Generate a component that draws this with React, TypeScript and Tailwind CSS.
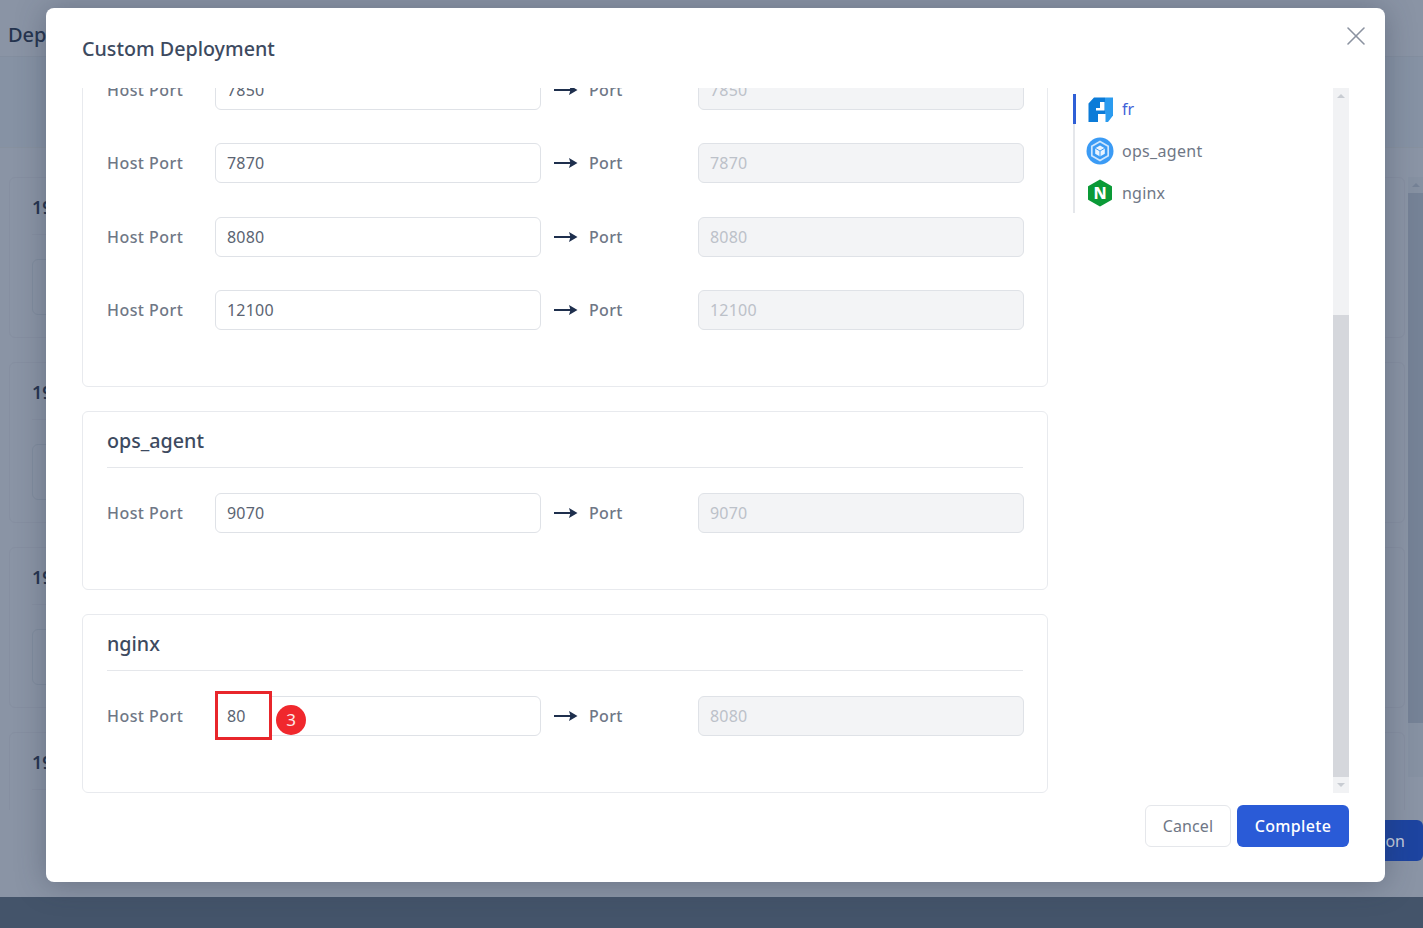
import { X } from "lucide-react";

const FONT = "font-['Noto_Sans','Open_Sans',sans-serif]";

const FrLogo = () => (
  <svg width="25" height="25" viewBox="0 0 25 25" fill="none">
    <path d="M6 0.5H17V25H10V17H10V25H0.5V6.5Z" fill="#0b7bd8" />
    <path d="M17 0.5H25V18.5L20 25H17Z" fill="#2a9bef" />
    <path d="M12 5H16.5V13.5H8V11H12Z" fill="#fff" />
    <path d="M10 17H17.5V25H10Z" fill="#fff" />
  </svg>
);

const OpsLogo = () => (
  <svg width="28" height="28" viewBox="0 0 28 28" fill="none">
    <circle cx="14" cy="14" r="13.5" fill="#3b9bf5" />
    <path d="M14 4.5l8.2 4.7v9.6L14 23.5l-8.2-4.7V9.2z" stroke="#cfe6fd" strokeWidth="1.7" />
    <path d="M14 8.5l4.8 2.7v5.6L14 19.5l-4.8-2.7v-5.6z" fill="#eaf4ff" />
    <path d="M9.2 11.2l4.8 2.8 4.8-2.8M14 14v5.5" stroke="#3b9bf5" strokeWidth="1" />
  </svg>
);

const NginxLogo = () => (
  <svg width="26" height="28" viewBox="0 0 26 28" fill="none">
    <path d="M13 1.5l11 6.3v12.4l-11 6.3-11-6.3V7.8z" fill="#0b9a37" stroke="#0b9a37" strokeWidth="2" strokeLinejoin="round" />
    <text x="13" y="20" textAnchor="middle" fontSize="16" fontWeight="800" fill="#fff" fontFamily="Noto Sans, sans-serif">
      N
    </text>
  </svg>
);

const Arrow = () => (
  <svg width="24" height="12" viewBox="0 0 24 12" fill="none" className="shrink-0">
    <path d="M0 6h18" stroke="#1e2f4d" strokeWidth="2" />
    <path d="M15 1l8.5 5-8.5 5 1.5-5z" fill="#1e2f4d" />
  </svg>
);

const PortRow = ({ port, target, mark }: { port: string; target?: string; mark?: boolean }) => (
  <div className="flex h-10 items-center">
    <span className="w-[108px] shrink-0 text-[16px] font-medium tracking-[0.45px] text-[#6f7786]">Host Port</span>
    <div className="relative w-[326px] shrink-0">
      <input
        readOnly
        value={mark ? "" : port}
        className="h-10 w-full rounded-md border border-[#dfe2e7] bg-white px-[11px] text-[16px] tracking-[0.2px] text-[#5b6472] outline-none"
      />
      {mark && (
        <>
          <div className="absolute top-[-5px] left-0 flex h-[49px] w-[57px] items-center border-[3px] border-[#e8262b] bg-white pl-[9px] text-[16px] tracking-[0.2px] text-[#5b6472]">
            {port}
          </div>
          <div className="absolute top-[9px] left-[61px] flex h-[30px] w-[30px] items-center justify-center rounded-full bg-[#f0282d] text-[17px] text-[#fde8e8]">
            3
          </div>
        </>
      )}
    </div>
    <span className="ml-[13px] flex items-center">
      <Arrow />
    </span>
    <span className="ml-[11px] w-[109px] shrink-0 text-[16px] font-medium tracking-[0.3px] text-[#6f7786]">Port</span>
    <input
      disabled
      value={target ?? port}
      className="h-10 w-[326px] shrink-0 rounded-md border border-[#dfe2e7] bg-[#f3f4f6] px-[11px] text-[16px] tracking-[0.2px] text-[#bcc1c9] outline-none"
    />
  </div>
);

const ServiceCard = ({ name, children }: { name: string; children: React.ReactNode }) => (
  <div className="rounded-md border border-[#e8eaee] px-6 pb-14">
    <div className="flex h-14 items-end border-b border-[#e5e7eb] pb-3 text-[19.7px] leading-[28px] font-medium text-[#3d4a5f]">
      {name}
    </div>
    <div className="flex flex-col gap-[33.5px] pt-[25px]">{children}</div>
  </div>
);

const BackCard = () => (
  <div className="h-[161px] shrink-0 rounded-md border border-[#868fa1] px-[22px] pt-[15px]">
    <div className="border-b border-[#868fa1] pb-[13px] text-[18px] leading-[28px] font-semibold text-[#25344f]">
      192.168.1.10
    </div>
    <div className="mt-6 h-[56px] rounded-md border border-[#808c9e]" />
  </div>
);

const Nav = () => (
  <div className="flex border-l-2 border-[#e5e7eb] pb-[5px]">
    <div className="flex w-full flex-col">
      <div className="relative flex h-[30px] items-center">
        <div className="absolute top-0 left-[-2px] h-[30px] w-[3px] bg-[#2f5fd6]" />
        <span className="ml-[13px] flex w-[25px] justify-center"><FrLogo /></span>
        <span className="ml-[9px] text-[16px] text-[#3f63d8]">fr</span>
      </div>
      <div className="mt-[12px] flex h-[30px] items-center">
        <span className="ml-[11px] flex w-[28px] justify-center"><OpsLogo /></span>
        <span className="ml-[8px] text-[16px] tracking-[0.3px] text-[#6f7786]">ops_agent</span>
      </div>
      <div className="mt-[12px] flex h-[30px] items-center">
        <span className="ml-[12px] flex w-[26px] justify-center"><NginxLogo /></span>
        <span className="ml-[9px] text-[16px] tracking-[0.2px] text-[#6f7786]">nginx</span>
      </div>
    </div>
  </div>
);

export default function App() {
  return (
    <div className={`relative h-[928px] w-[1423px] overflow-hidden bg-[#8a94a5] ${FONT}`}>
      {/* page behind the dialog */}
      <div className="flex h-full flex-col">
        <div className="flex h-[57px] shrink-0 items-center border-b border-[#838e9f] pt-[14px] pl-2 text-[20px] font-medium text-[#25344f]">
          Deployment
        </div>
        <div className="h-[91px] shrink-0 border-b border-[#87919f] bg-[#8692a4]" />
        <div className="flex h-[662px] shrink-0 overflow-hidden pt-[29px] pl-[9px]">
          <div className="flex w-[1396px] shrink-0 flex-col gap-6">
            <BackCard />
            <BackCard />
            <BackCard />
            <BackCard />
          </div>
          <div className="ml-[3px] h-[600px] w-[15px] bg-[#8691a2]">
            <div className="flex h-4 items-center justify-center">
              <div className="h-0 w-0 border-x-[4px] border-b-[4px] border-x-transparent border-b-[#758296]" />
            </div>
            <div className="h-[530px] bg-[#758296]" />
          </div>
        </div>
        <div className="flex h-[87px] shrink-0 justify-end pt-[10px]">
          <div className="flex h-[41px] items-center rounded-md bg-[#1d44a0] px-[18px] text-[16px] text-[#c5cede]">
            Action
          </div>
        </div>
        <div className="h-[31px] shrink-0 bg-[#44546a]" />
      </div>

      {/* dialog */}
      <div className="absolute top-2 left-[46px] flex h-[874px] w-[1339px] flex-col rounded-lg bg-white shadow-[0_2px_30px_rgba(40,50,70,0.35)]">
        <div className="flex h-[80px] shrink-0 items-start justify-between pt-[26px] pr-[13px] pl-9">
          <span className="text-[19.7px] leading-[30px] font-medium text-[#3d4a5f]">Custom Deployment</span>
          <X size={32} strokeWidth={1.2} className="-mt-[14px] text-[#8b92a0]" />
        </div>
        <div className="flex h-[705px] shrink-0 pl-9">
          <div className="h-full w-[966px] shrink-0 overflow-hidden">
            <div className="-mt-[100.5px] flex flex-col gap-6">
              <ServiceCard name="fr">
                <PortRow port="7850" />
                <PortRow port="7870" />
                <PortRow port="8080" />
                <PortRow port="12100" />
              </ServiceCard>
              <ServiceCard name="ops_agent">
                <PortRow port="9070" />
              </ServiceCard>
              <ServiceCard name="nginx">
                <PortRow port="80" target="8080" mark />
              </ServiceCard>
            </div>
          </div>
          <div className="ml-[25px] w-[260px] shrink-0 pt-[6px]">
            <Nav />
          </div>
          <div className="flex h-full w-4 shrink-0 flex-col items-center bg-[#f1f2f4]">
            <div className="flex h-4 w-full shrink-0 items-center justify-center">
              <div className="h-0 w-0 border-x-[4px] border-b-[4px] border-x-transparent border-b-[#c8ccd2]" />
            </div>
            <div className="mt-[211px] h-[462px] w-full bg-[#d5d7dc]" />
            <div className="flex h-4 w-full shrink-0 items-center justify-center">
              <div className="h-0 w-0 border-x-[4px] border-t-[4px] border-x-transparent border-t-[#c8ccd2]" />
            </div>
          </div>
        </div>
        <div className="flex justify-end gap-[6px] pt-3 pr-9">
          <button className="h-[42px] w-[86px] rounded-md border border-[#e5e7eb] bg-white text-[16px] tracking-[0.1px] text-[#6f7786]">
            Cancel
          </button>
          <button className="h-[42px] w-[112px] rounded-md bg-[#2a5bd7] text-[16px] font-medium tracking-[0.35px] text-white">
            Complete
          </button>
        </div>
      </div>
    </div>
  );
}
